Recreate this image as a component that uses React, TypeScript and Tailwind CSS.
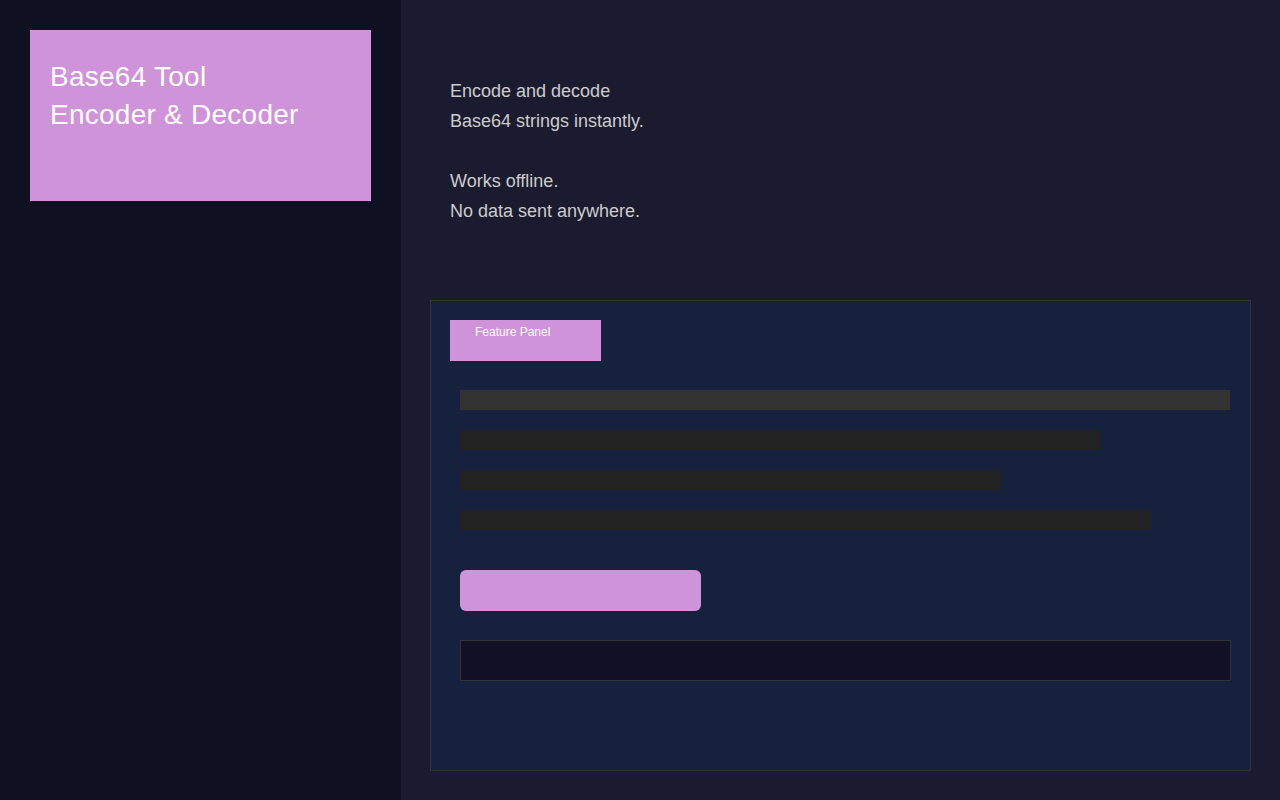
import React from "react";

const bars = [
  { width: "w-[770px]", color: "bg-[#333333]" },
  { width: "w-[641px]", color: "bg-[#222222]" },
  { width: "w-[541px]", color: "bg-[#222222]" },
  { width: "w-[691px]", color: "bg-[#222222]" },
];

const App: React.FC = () => {
  return (
    <div className="flex h-[800px] w-[1280px] overflow-hidden font-['Liberation_Sans',Arial,sans-serif]">
      {/* Sidebar with title card */}
      <aside className="w-[401px] shrink-0 bg-[#0f1021] p-[30px]">
        <div className="h-[171px] bg-[#ce93d8] pl-[20px] pt-[28px] text-[28px] leading-[38px] tracking-[0.25px] text-white">
          <div>Base64 Tool</div>
          <div>Encoder &amp; Decoder</div>
        </div>
      </aside>

      {/* Main content */}
      <main className="flex-1 bg-[#1b1b2f] pl-[29px] pr-[30px]">
        <div className="pl-[20px] pt-[76px] text-[18px] leading-[30px] text-[#cccccc]">
          <p>Encode and decode</p>
          <p className="mb-[30px]">Base64 strings instantly.</p>
          <p>Works offline.</p>
          <p>No data sent anywhere.</p>
        </div>

        <section className="mt-[74px] h-[471px] border border-[#333333] bg-[#16213e] px-[19px] pt-[19px]">
          <div className="h-[41px] w-[151px] bg-[#ce93d8] pl-[25px] pt-[3px] text-[12px] text-white">
            Feature Panel
          </div>

          <div className="ml-[10px] mt-[29px] flex flex-col gap-[20px]">
            {bars.map((bar, i) => (
              <div key={i} className={`h-[20px] ${bar.width} ${bar.color}`} />
            ))}
          </div>

          <div className="ml-[10px] mt-[40px] h-[41px] w-[241px] rounded-[6px] bg-[#ce93d8]" />

          <div className="ml-[10px] mt-[29px] h-[41px] w-[771px] border border-[#333333] bg-[#101124]" />
        </section>
      </main>
    </div>
  );
};

export default App;
